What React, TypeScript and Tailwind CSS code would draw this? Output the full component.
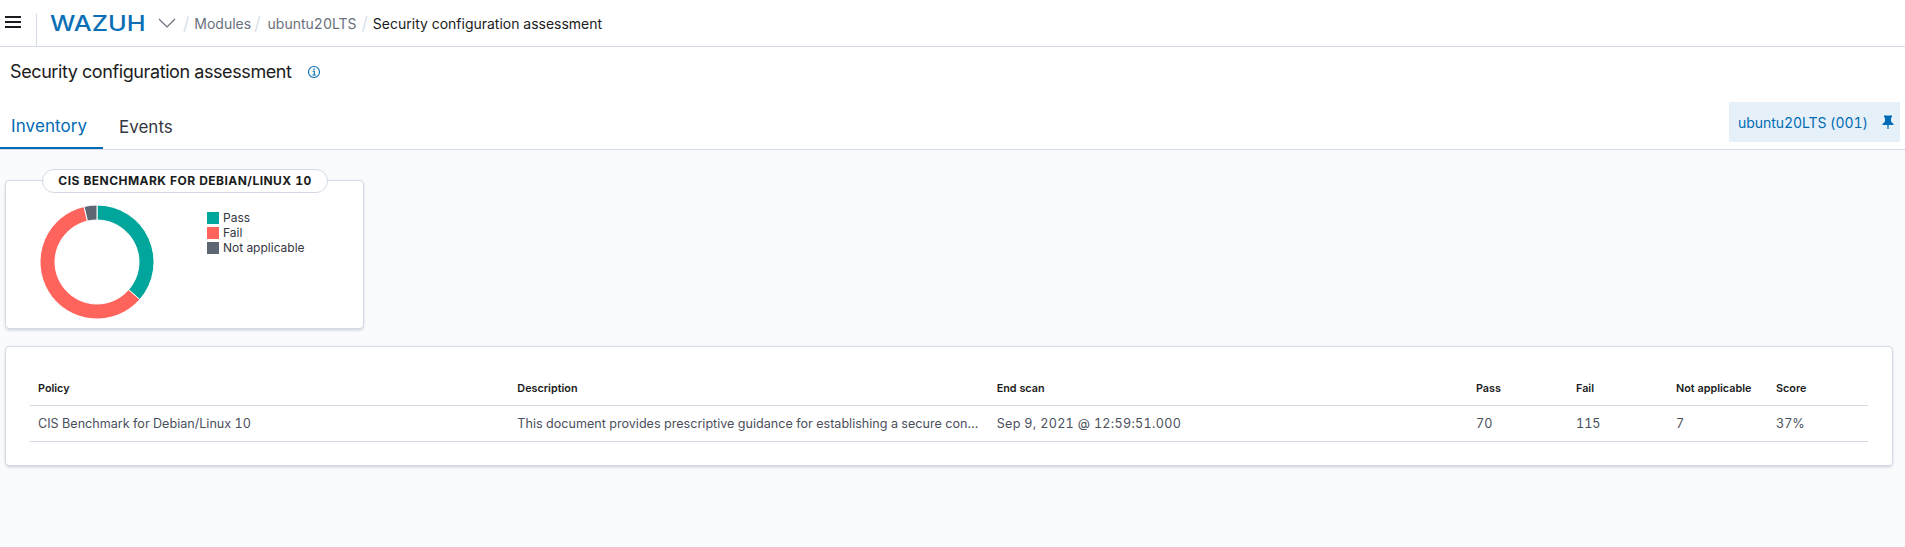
import React from "react";

const C = 57, R = 57, r = 42;
function slice(a0: number, a1: number) {
  const p = (rad: number, a: number) => {
    const t = (a * Math.PI) / 180;
    return `${(C + rad * Math.sin(t)).toFixed(2)} ${(C - rad * Math.cos(t)).toFixed(2)}`;
  };
  const large = a1 - a0 > 180 ? 1 : 0;
  return `M${p(R, a0)}A${R} ${R} 0 ${large} 1 ${p(R, a1)}L${p(r, a1)}A${r} ${r} 0 ${large} 0 ${p(r, a0)}Z`;
}
const total = 192;
const slices = [
  { v: 70, c: "#00a69b" },
  { v: 115, c: "#ff645c" },
  { v: 7, c: "#5c6773" },
];

function Donut() {
  let a = 0;
  return (
    <svg width="114" height="114" viewBox="0 0 114 114" className="block">
      {slices.map((s, i) => {
        const a0 = a;
        a += (s.v / total) * 360;
        return <path key={i} d={slice(a0, a)} fill={s.c} stroke="#fff" strokeWidth="1" />;
      })}
    </svg>
  );
}

const cols = ["Policy", "Description", "End scan", "Pass", "Fail", "Not applicable", "Score"];
const row = [
  "CIS Benchmark for Debian/Linux 10",
  "This document provides prescriptive guidance for establishing a secure configuration posture for Debian Linux 10.",
  "Sep 9, 2021 @ 12:59:51.000",
  "70",
  "115",
  "7",
  "37%",
];

export default function App() {
  return (
    <div className="h-[547px] flex flex-col bg-[#fafbfd] font-['Inter',sans-serif] text-[#343741] overflow-hidden tabular-nums">
      <nav className="h-[47px] shrink-0 flex items-center bg-white border-b border-[#d3dae6]">
        <svg width="16" height="12" viewBox="0 0 16 12" className="ml-[5px] -mt-[2px] shrink-0">
          <path d="M0 1h16M0 6h16M0 11h16" stroke="#1a1c21" strokeWidth="2" />
        </svg>
        <div className="ml-[15px] h-[32px] w-px bg-[#d3dae6] mt-[14px] shrink-0" />
        <span className="ml-[13px] w-[98px] text-[22px] leading-none font-medium text-[#0a6fb5] origin-left scale-x-[1.15]">WAZUH</span>
        <svg width="18" height="10" viewBox="0 0 18 10" className="ml-[10px] shrink-0">
          <path d="M1 1l8 8 8-8" fill="none" stroke="#69707d" strokeWidth="1.2" />
        </svg>
        <span className="ml-[7px] text-[18px] font-light text-[#d3dae6]">/</span>
        <span className="ml-[5px] text-[14px] text-[#69707d] w-[55px] whitespace-nowrap">Modules</span>
        <span className="ml-[5px] text-[18px] font-light text-[#d3dae6]">/</span>
        <span className="ml-[7px] text-[14px] text-[#69707d] whitespace-nowrap">ubuntu20LTS</span>
        <span className="ml-[5px] text-[18px] font-light text-[#d3dae6]">/</span>
        <span className="ml-[5px] text-[14px] text-[#1a1c21] whitespace-nowrap">Security configuration assessment</span>
      </nav>

      <header className="shrink-0 bg-white border-b border-[#d3dae6]">
        <div className="h-[48px] flex items-center pl-[10px] pt-[1px]">
          <h1 className="text-[18px] leading-none tracking-[-0.4px] text-[#1a1c21]">Security configuration assessment</h1>
          <svg width="14" height="14" viewBox="0 0 14 14" className="ml-[15px]">
            <circle cx="7" cy="7" r="5.5" fill="none" stroke="#006bb4" strokeWidth="1.1" />
            <path d="M5.6 6.2H7.3V10M5.4 10H8.8" fill="none" stroke="#006bb4" strokeWidth="1.1" />
            <rect x="6.4" y="3.5" width="1.4" height="1.4" fill="#006bb4" />
          </svg>
        </div>
        <div className="h-[54px] flex items-end justify-between">
          <div className="flex">
            <div className="h-[48px] w-[103px] pl-[11px] pt-[5px] flex items-center text-[17px] tracking-[0.1px] text-[#006bb4] border-b-2 border-[#006bb4] -mb-px">Inventory</div>
            <div className="h-[48px] ml-[16px] pt-[5px] flex items-center text-[17px] text-[#343741]">Events</div>
          </div>
          <div className="mr-[5px] mb-[7px] h-[40px] w-[171px] bg-[#e6f0f8] flex items-center pl-[9px] text-[14px] tracking-[-0.06px] text-[#006bb4]">
            <span className="whitespace-nowrap">ubuntu20LTS (001)</span>
            <svg width="12" height="14" viewBox="0 0 12 14" className="ml-auto mr-[6px]">
              <path d="M2 0.5h8v1.5L9 3v3.5L11.5 9v1H6.6v4h-1.2v-4H0.5V9L3 6.5V3L2 2z" fill="#006bb4" />
            </svg>
          </div>
        </div>
      </header>

      <main className="flex-1 pl-[5px] pr-[12px]">
        <section className="relative mt-[30px] w-[359px] h-[149px] bg-white border border-[#d3dae6] rounded-[4px] shadow-[0_2px_3px_-1px_rgba(152,162,179,0.4),0_1px_5px_-2px_rgba(152,162,179,0.4)]">
          <div className="absolute left-[36px] top-[-12px] w-[286px] h-[24px] bg-white border border-[#d3dae6] rounded-full flex items-center justify-center text-[12px] font-bold tracking-[0.45px] text-[#1a1c21] whitespace-nowrap">
            CIS BENCHMARK FOR DEBIAN/LINUX 10
          </div>
          <div className="flex pt-[24px] pl-[34px]">
            <Donut />
            <ul className="ml-[53px] mt-[5px] text-[12px] leading-[15px] text-[#343741]">
              <li className="flex items-center h-[15px]"><span className="w-[12px] h-[12px] bg-[#00a69b] mr-[4px]" />Pass</li>
              <li className="flex items-center h-[15px]"><span className="w-[12px] h-[12px] bg-[#ff645c] mr-[4px]" />Fail</li>
              <li className="flex items-center h-[15px]"><span className="w-[12px] h-[12px] bg-[#5c6773] mr-[4px]" />Not applicable</li>
            </ul>
          </div>
        </section>

        <section className="mt-[17px] h-[120px] bg-white border border-[#d3dae6] rounded-[4px] p-[24px] shadow-[0_2px_3px_-1px_rgba(152,162,179,0.4),0_1px_5px_-2px_rgba(152,162,179,0.4)]">
          <table className="w-full table-fixed border-collapse">
            <colgroup>
              <col />
              <col />
              <col />
              <col className="w-[100px]" />
              <col className="w-[100px]" />
              <col className="w-[100px]" />
              <col className="w-[100px]" />
            </colgroup>
            <thead>
              <tr className="h-[34px] border-b border-[#d3dae6]">
                {cols.map((c) => (
                  <th key={c} className="px-[8px] pt-[2px] text-left text-[10.8px] font-semibold text-[#1a1c21] whitespace-nowrap">{c}</th>
                ))}
              </tr>
            </thead>
            <tbody>
              <tr className="h-[36px] border-b border-[#d3dae6]">
                {row.map((c, i) => (
                  <td key={i} className={i === 2 ? "px-[8px] pt-[2px] text-[#4a4f5c] text-[12.6px] tracking-[0.3px] truncate" : "px-[8px] pt-[2px] text-[#4a4f5c] text-[12.6px] truncate"}>{c}</td>
                ))}
              </tr>
            </tbody>
          </table>
        </section>
      </main>
    </div>
  );
}
